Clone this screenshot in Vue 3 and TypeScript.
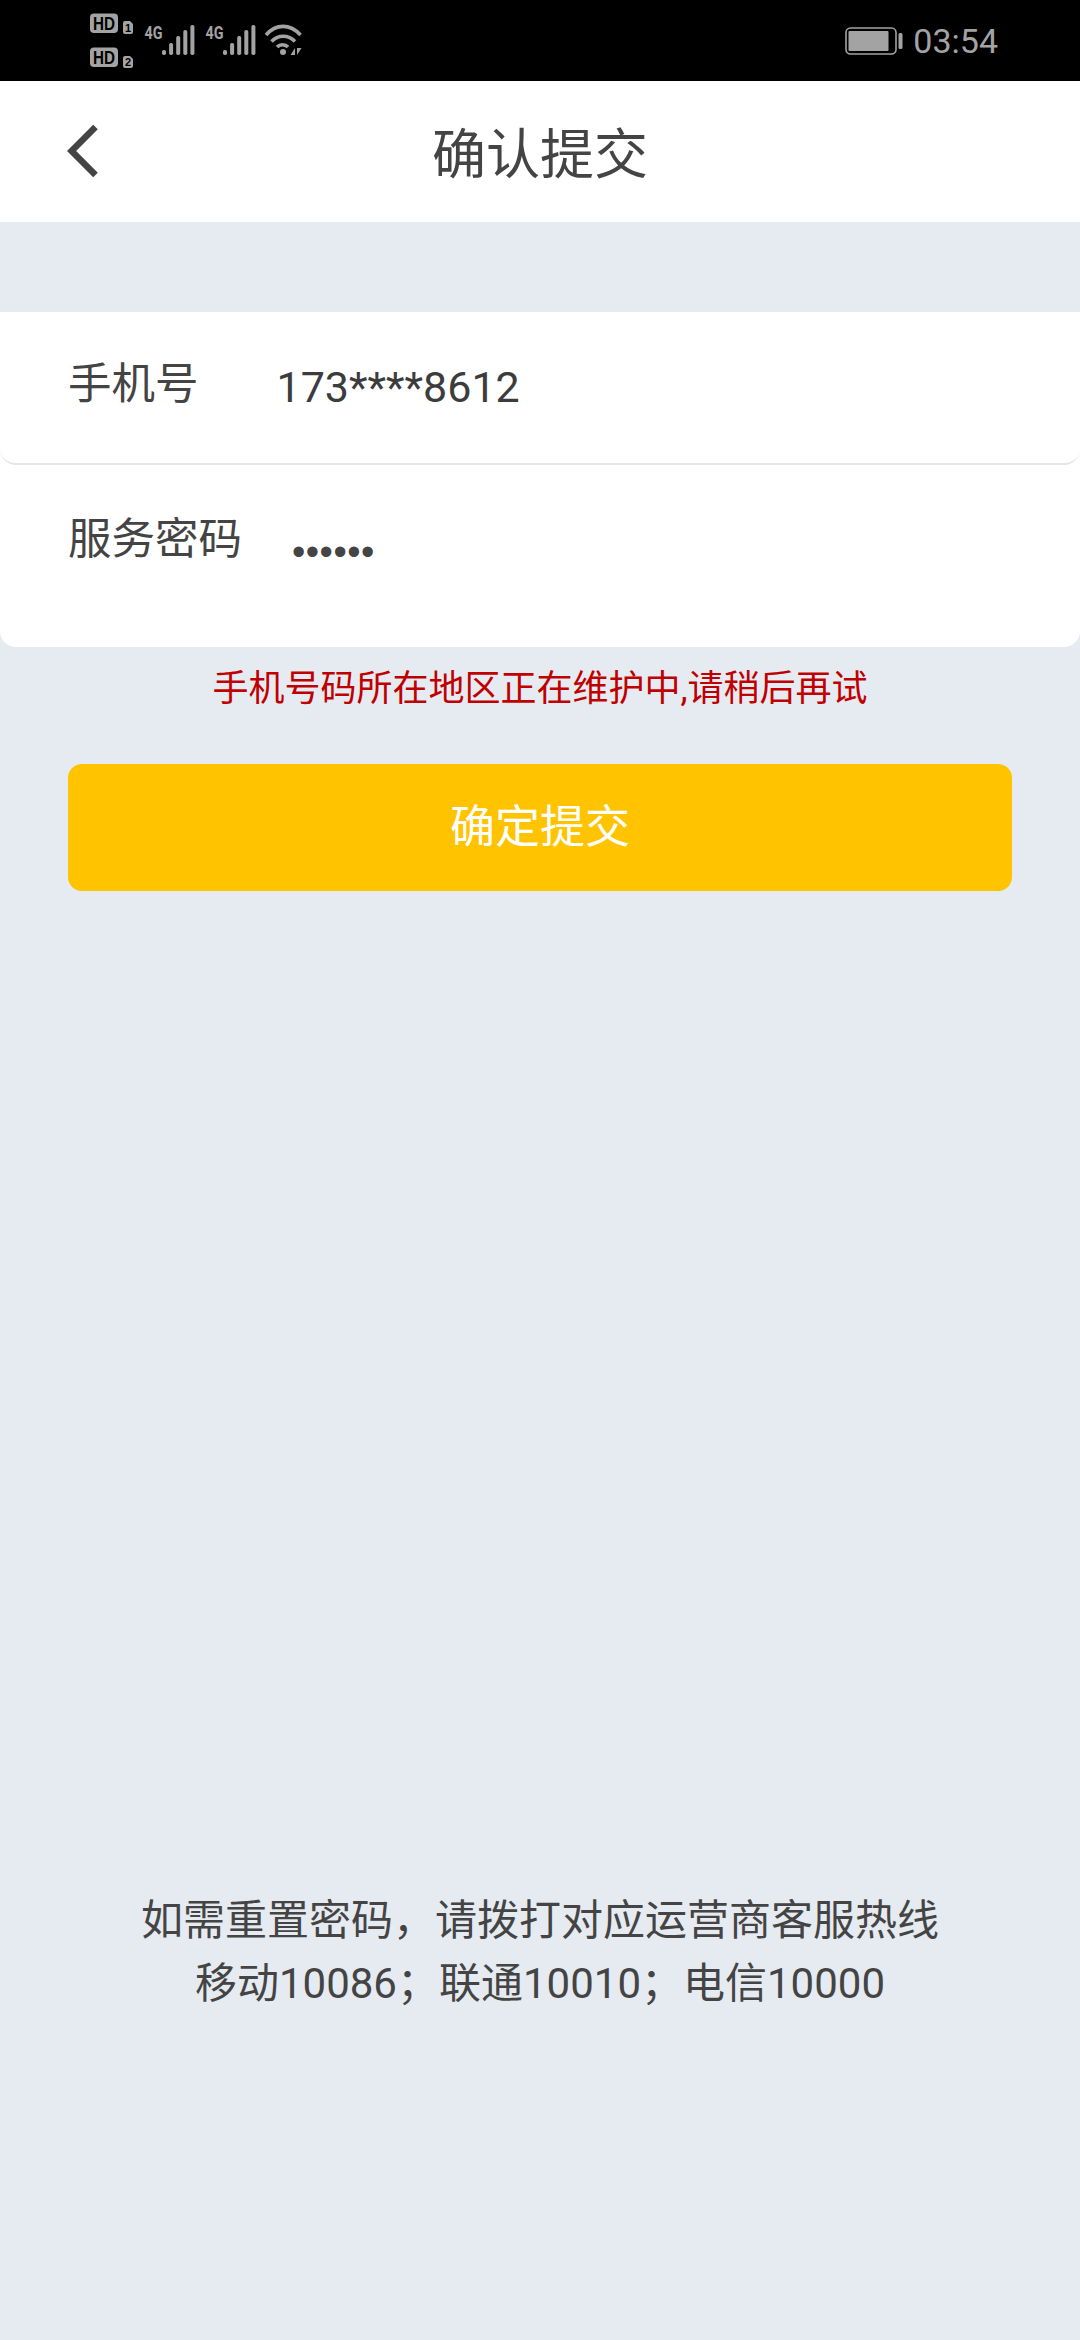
<script setup lang="ts">
const makeBars = (start: number) =>
  [
    { top: 50 },
    { top: 43 },
    { top: 36 },
    { top: 30 },
    { top: 25 },
  ].map((b, i) => ({ x: start + i * 7.1, y: b.top, h: 55 - b.top }))

const signalA = makeBars(162)
const signalB = makeBars(223)
</script>

<template>
  <div class="page">
    <div class="status">
      <svg class="status-left" width="220" height="81" viewBox="88 0 220 81">
        <rect x="90" y="13.500" width="28" height="19.500" rx="4" fill="#a3a3a3" />
        <rect x="90" y="47.500" width="28" height="19.500" rx="4" fill="#a3a3a3" />
        <text x="104" y="30" class="hd" textLength="22" lengthAdjust="spacingAndGlyphs">HD</text>
        <text x="104" y="64" class="hd" textLength="22" lengthAdjust="spacingAndGlyphs">HD</text>
        <path d="M123 23a2 2 0 0 1 2-2h5l3 3v8a2 2 0 0 1-2 2h-6a2 2 0 0 1-2-2z" fill="#a3a3a3" />
        <path d="M123 58a2 2 0 0 1 2-2h5l3 3v7a2 2 0 0 1-2 2h-6a2 2 0 0 1-2-2z" fill="#a3a3a3" />
        <text x="128" y="32" class="sim">1</text>
        <text x="128" y="66" class="sim">2</text>
        <text x="144.500" y="38.500" class="net" textLength="18" lengthAdjust="spacingAndGlyphs">4G</text>
        <text x="205.500" y="38.500" class="net" textLength="18" lengthAdjust="spacingAndGlyphs">4G</text>
        <g fill="#a3a3a3">
          <rect v-for="b in signalA" :key="b.x" :x="b.x" :y="b.y" width="4" :height="b.h" rx="1.800" />
          <rect v-for="b in signalB" :key="b.x" :x="b.x" :y="b.y" width="4" :height="b.h" rx="1.800" />
        </g>
        <g fill="none" stroke="#a3a3a3" stroke-width="3.600">
          <path d="M266 35c10-11.500 24-11.500 34.500 0" />
          <path d="M271.500 41.500c6.500-7 17-7 23.500 0" />
          <path d="M277 47c3-3 8-3 11 0" />
        </g>
        <circle cx="283" cy="52" r="3" fill="#a3a3a3" />
        <path d="M295 48v7h-4.500zM297 48v7l4.500-7z" fill="#a3a3a3" />
      </svg>
      <div class="status-right">
        <svg class="battery" width="58" height="28" viewBox="0 0 58 28">
          <rect x="1" y="1" width="50" height="26" rx="4.500" fill="none" stroke="#a3a3a3" stroke-width="1.600" />
          <rect x="3.500" y="4" width="40" height="20" rx="1" fill="#a3a3a3" />
          <rect x="53.500" y="6" width="4" height="16" rx="1.500" fill="#a3a3a3" />
        </svg>
        <span class="time">03:54</span>
      </div>
    </div>

    <header class="nav">
      <svg class="back" width="40" height="60" viewBox="0 0 40 60">
        <path d="M31.500 6 7.600 30l23.900 24" fill="none" stroke="#444" stroke-width="6.500" />
      </svg>
      <h1 class="title">确认提交</h1>
    </header>

    <section class="card">
      <div class="row row-phone">
        <span class="label label-phone">手机号</span>
        <span class="value">173****8612</span>
      </div>
      <div class="row row-pass">
        <span class="label">服务密码</span>
        <span class="dots">••••••</span>
      </div>
    </section>

    <p class="error">手机号码所在地区正在维护中,请稍后再试</p>
    <button class="submit" type="button">确定提交</button>

    <footer class="hint">
      <p>如需重置密码，请拨打对应运营商客服热线</p>
      <p>移动10086；联通10010；电信10000</p>
    </footer>
  </div>
</template>

<style>
html, body { margin: 0; background: #e6ebf1; }
</style>

<style scoped>
.page {
  width: 1080px;
  height: 2340px;
  display: flex;
  flex-direction: column;
  overflow: hidden;
  background: #e6ebf1;
  font-family: Roboto, "Noto Sans CJK SC", sans-serif;
  color: #444;
}
.status {
  height: 81px;
  flex: none;
  background: #000;
  display: flex;
  justify-content: space-between;
  align-items: center;
  padding: 0 82px 0 88px;
}
.status-left { display: block; }
.hd {
  font: 700 19px "Liberation Sans", sans-serif;
  fill: #000;
  text-anchor: middle;
}
.sim {
  font: 700 11px "Liberation Sans", sans-serif;
  fill: #000;
  text-anchor: middle;
}
.net {
  font: 700 18px Roboto, sans-serif;
  fill: #a3a3a3;
}
.status-right {
  display: flex;
  align-items: center;
  gap: 10px;
}
.time {
  font: 400 34px Roboto, sans-serif;
  color: #a3a3a3;
  line-height: 1;
}
.nav {
  height: 141px;
  flex: none;
  background: #fff;
  display: flex;
  align-items: center;
  justify-content: center;
  position: relative;
}
.back {
  position: absolute;
  left: 64px;
  top: 40px;
}
.title {
  margin: 0 0 -8px;
  font-size: 54px;
  font-weight: 400;
  line-height: 1;
}
.card {
  margin-top: 90px;
  display: flex;
  flex-direction: column;
  flex: none;
  background: #fff;
  border-radius: 0 0 16px 16px;
}
.row {
  display: flex;
  padding-left: 68px;
  font-size: 43.500px;
}
.row-phone {
  height: 153px;
  box-sizing: border-box;
  align-items: center;
  border-bottom: 2px solid #e4e6e8;
  border-radius: 0 0 16px 16px;
}
.row-pass {
  height: 182px;
  padding-top: 48px;
  box-sizing: border-box;
}
.label {
  line-height: 54px;
}
.label-phone {
  margin-bottom: 5px;
}
.value {
  margin-left: 78px;
  margin-bottom: 1px;
  font-size: 43px;
  color: #3c3c3c;
}
.dots {
  margin-left: 50px;
  font-family: "Liberation Sans", sans-serif;
  font-size: 38px;
  line-height: 54px;
  letter-spacing: 0.500px;
  position: relative;
  top: 12px;
}
.error {
  margin: 20px 0 0;
  text-align: center;
  font-size: 36px;
  line-height: 44px;
  color: #c00000;
}
.submit {
  display: block;
  flex: none;
  width: 944px;
  height: 127px;
  margin: 53px 0 0 68px;
  padding: 0 0 8px;
  border: 0;
  border-radius: 14px;
  background: #ffc300;
  color: #fff;
  font-family: inherit;
  font-size: 45px;
}
.hint {
  margin-top: 998px;
  text-align: center;
  font-size: 42px;
  line-height: 63px;
  color: #444;
}
.hint p { margin: 0; }
</style>
